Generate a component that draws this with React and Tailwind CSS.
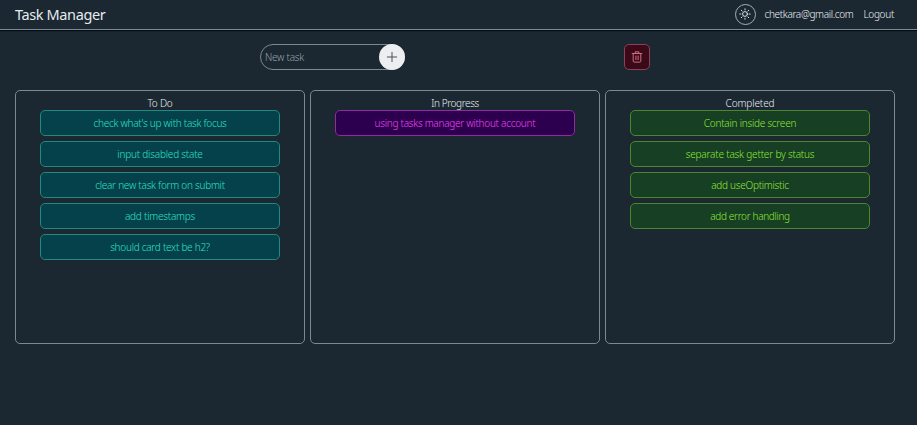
import { LuPlus } from "react-icons/lu";

const columns = [
  {
    title: "To Do",
    titleSpacing: "tracking-[-0.2px]",
    card: "border-[#1f8a80] bg-[#05414b] text-[#2be0c6]",
    tasks: [
      ["check what's up with task focus", "tracking-[-0.27px]"],
      ["input disabled state", "tracking-[-0.2px]"],
      ["clear new task form on submit", "tracking-[-0.25px]"],
      ["add timestamps", "tracking-[-0.22px]"],
      ["should card text be h2?", "tracking-[-0.26px]"],
    ],
  },
  {
    title: "In Progress",
    titleSpacing: "tracking-[-0.4px]",
    card: "border-[#8f2d9c] bg-[#2c004e] text-[#f045f5]",
    tasks: [["using tasks manager without account", "tracking-[-0.26px]"]],
  },
  {
    title: "Completed",
    titleSpacing: "tracking-[-0.1px]",
    card: "border-[#4c8631] bg-[#173f23] text-[#90e636]",
    tasks: [
      ["Contain inside screen", "tracking-[-0.24px]"],
      ["separate task getter by status", "tracking-[-0.18px]"],
      ["add useOptimistic", "tracking-[-0.26px]"],
      ["add error handling", "tracking-[-0.33px]"],
    ],
  },
];

function SunIcon() {
  return (
    <svg width="12" height="12" viewBox="0 0 12 12" fill="none" stroke="currentColor" strokeWidth="0.9" strokeLinecap="round">
      <circle cx="6" cy="6" r="2.4" />
      <path d="M6 .8v1.1M6 10.1v1.1M.8 6h1.1M10.1 6h1.1M2.3 2.3l.8.8M8.9 8.9l.8.8M2.3 9.7l.8-.8M8.9 3.1l.8-.8" />
    </svg>
  );
}

function TrashIcon() {
  return (
    <svg width="12" height="12" viewBox="0 0 12 12" fill="none" stroke="currentColor" strokeWidth="1" strokeLinecap="round" strokeLinejoin="round">
      <path d="M1.2 2.5h9.6M2.2 2.5v7.6q0 1 1 1h5.6q1 0 1-1V2.5M4.2 2.3V.8h3.6v1.5M4.9 5v3.6M7.1 5v3.6" />
    </svg>
  );
}

function Column({ title, titleSpacing, card, tasks }) {
  return (
    <section className="flex h-[254px] w-[290px] flex-col items-center rounded-[5px] border border-[#7c8990] pt-[5px]">
      <h2 className={`h-[14px] text-[10px] leading-[15px] text-[#e8eef2] ${titleSpacing}`}>{title}</h2>
      <ul className="flex w-[240px] flex-col gap-[5px]">
        {tasks.map(([label, spacing]) => (
          <li key={label} className={`flex h-[26px] items-center justify-center rounded-[5px] border pt-px text-[10px] whitespace-nowrap ${card}`}>
            <span className={spacing}>{label}</span>
          </li>
        ))}
      </ul>
    </section>
  );
}

export default function App() {
  return (
    <div className="flex h-screen flex-col overflow-hidden bg-[#1b2731] font-['Noto_Sans','Open_Sans',sans-serif] font-light text-[#edf2f5]">
      <header className="flex h-[30px] shrink-0 items-center justify-between border-b border-[#7c8b95] pr-[23px] pl-[15px] shadow-[0_1px_1px_#050d14]">
        <h1 className="-mt-0.5 text-[14.5px] leading-5 font-normal tracking-[-0.38px] text-[#e5ebef]">Task Manager</h1>
        <nav className="-mt-px flex items-center text-[10px] tracking-[-0.33px]">
          <button className="flex size-[21px] items-center justify-center rounded-full border border-[#a5afb5]">
            <SunIcon />
          </button>
          <span className="ml-[9px]">chetkara@gmail.com</span>
          <button className="ml-[10px] tracking-[-0.3px]">Logout</button>
        </nav>
      </header>
      <main className="pl-[15px]">
        <div className="flex h-[60px] pt-[14px] pl-[245px]">
          <form className="flex h-[26px] w-[145px] items-center justify-between rounded-full border border-[#7c8990] pl-1 text-[10px] tracking-[-0.25px] text-[#98a3aa]">
            <span>New task</span>
            <button type="button" className="-mr-px flex size-[26px] items-center justify-center rounded-full bg-[#eceeef] text-[#46505a]">
              <LuPlus size={16} strokeWidth={1.5} />
            </button>
          </form>
          <button className="ml-[219px] flex size-[26px] items-center justify-center rounded-[5px] border border-[#8c4254] bg-[#3b0a19] text-[#d06c83]">
            <TrashIcon />
          </button>
        </div>
        <div className="flex gap-[5px]">
          {columns.map((column) => (
            <Column key={column.title} {...column} />
          ))}
        </div>
      </main>
    </div>
  );
}
